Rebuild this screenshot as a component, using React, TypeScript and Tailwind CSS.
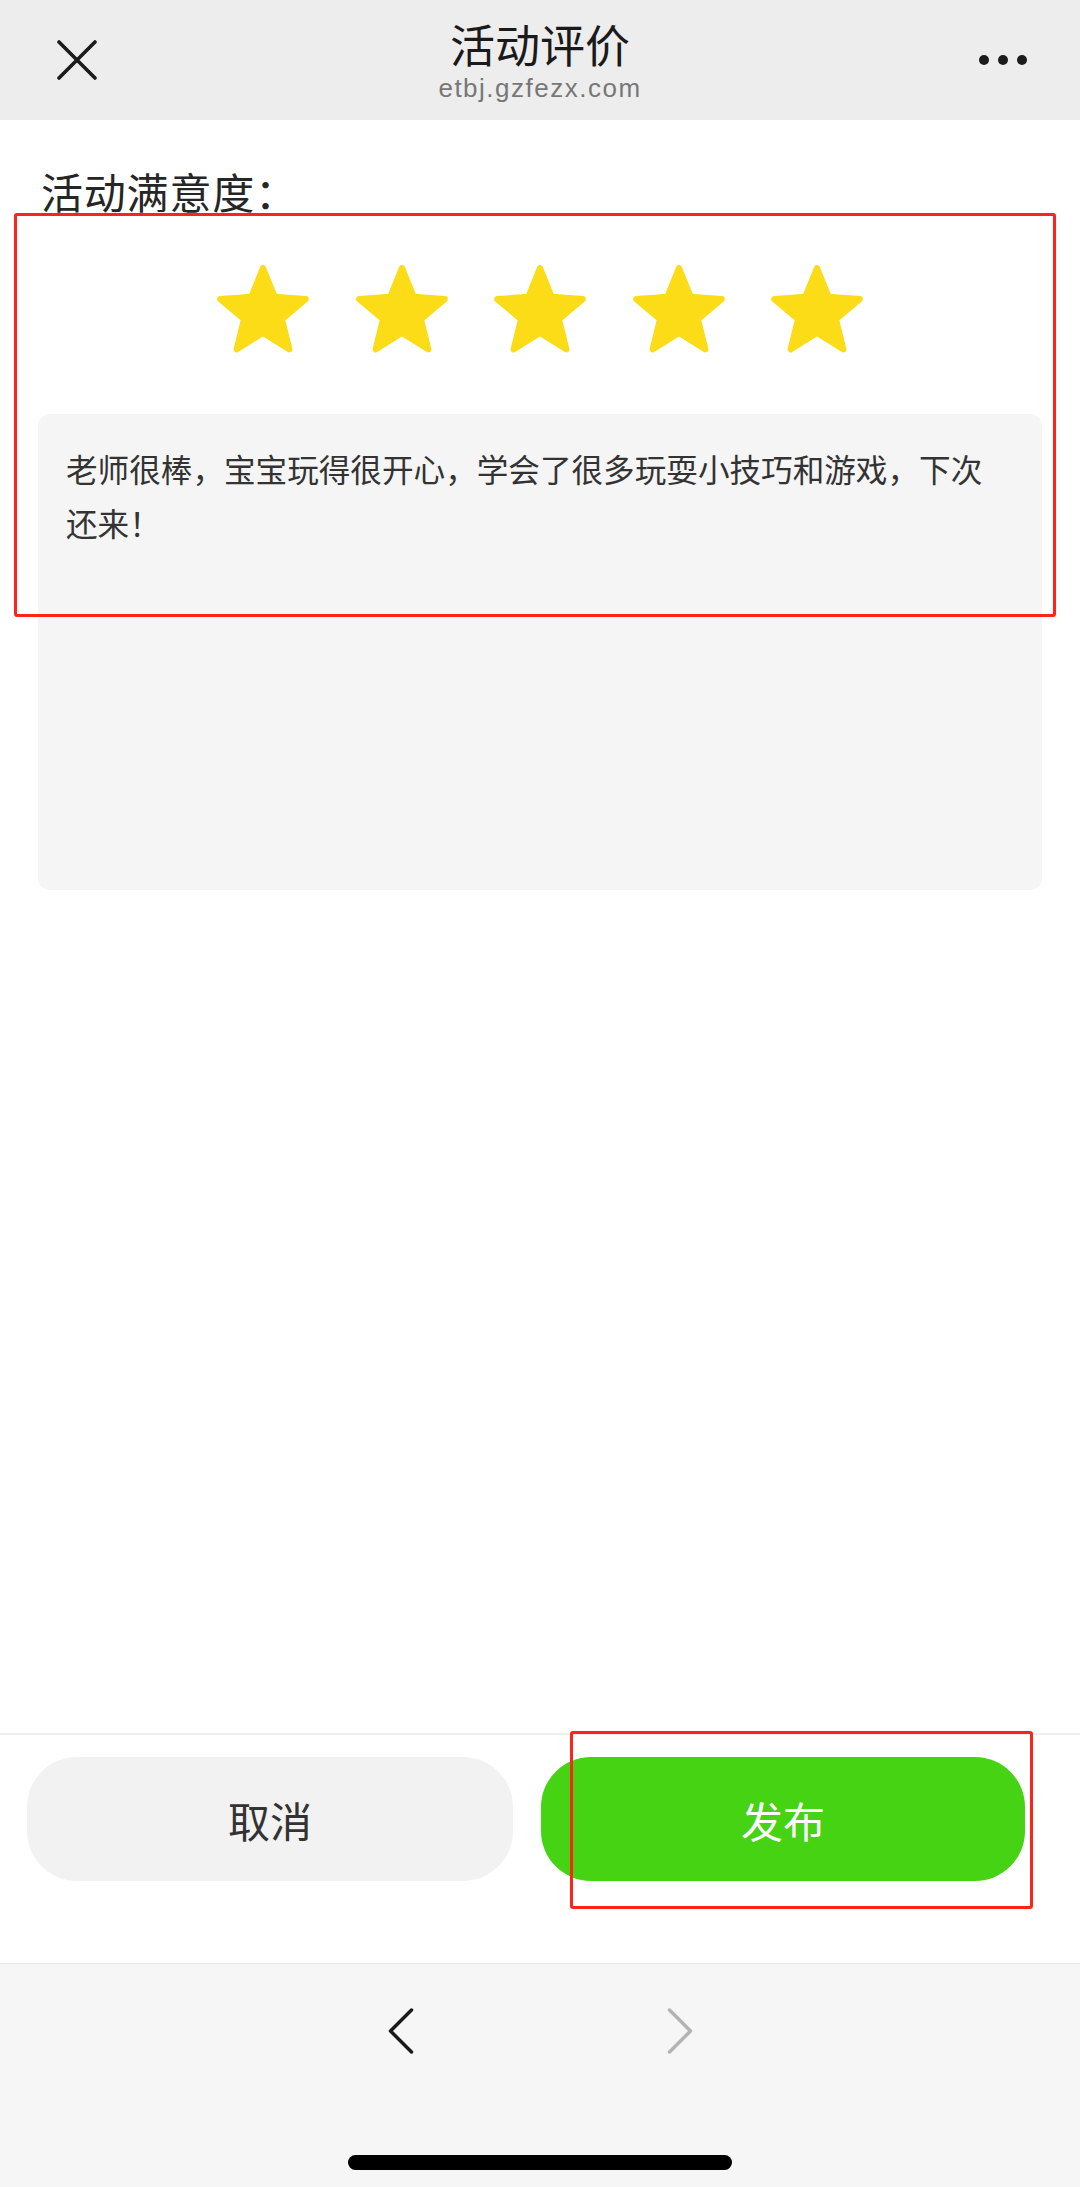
import React from "react";

const CJK = '"Noto Sans CJK SC", "Noto Sans", sans-serif';

function starPoints(cx: number, cy: number, R: number, r: number) {
  const pts: string[] = [];
  for (let i = 0; i < 10; i++) {
    const a = -Math.PI / 2 + (i * Math.PI) / 5;
    const rad = i % 2 === 0 ? R : r;
    pts.push(`${(cx + rad * Math.cos(a)).toFixed(2)},${(cy + rad * Math.sin(a)).toFixed(2)}`);
  }
  return pts.join(" ");
}

function Star() {
  return (
    <svg width="92" height="88" viewBox="0 0 92 88" className="block shrink-0">
      <polygon
        points={starPoints(46, 48, 45, 20)}
        fill="#fbdc17"
        stroke="#fbdc17"
        strokeWidth="6"
        strokeLinejoin="round"
      />
    </svg>
  );
}

export default function App() {
  return (
    <div
      className="relative flex h-[2187px] w-[1080px] flex-col overflow-hidden bg-white"
      style={{ fontFamily: CJK }}
    >
      {/* Header */}
      <header className="flex h-[120px] shrink-0 items-center bg-[#ededed]">
        <div className="flex w-[154px] items-center pl-[57px]">
          <svg width="40" height="40" viewBox="0 0 40 40">
            <path
              d="M2 2 L38 38 M38 2 L2 38"
              stroke="#1b1b1b"
              strokeWidth="3.6"
              strokeLinecap="round"
            />
          </svg>
        </div>

        <div className="flex flex-1 flex-col items-center">
          <p className="text-[45px] leading-[52px] text-[#1a1a1a]">
            活动评价
          </p>
          <p
            className="mt-[4px] text-[26px] leading-[28px] tracking-[1.5px] text-[#777777]"
            style={{ fontFamily: '"Liberation Sans", Arial, sans-serif' }}
          >
            etbj.gzfezx.com
          </p>
        </div>

        <div className="flex w-[154px] items-center justify-end gap-[9px] pr-[53px]">
          <span className="h-[10px] w-[10px] rounded-full bg-[#1b1b1b]" />
          <span className="h-[10px] w-[10px] rounded-full bg-[#1b1b1b]" />
          <span className="h-[10px] w-[10px] rounded-full bg-[#1b1b1b]" />
        </div>
      </header>

      {/* Content */}
      <main className="flex flex-1 flex-col px-[38px]">
        <p className="mt-[46px] pl-[3px] text-[42px] leading-[50px] tracking-[0.8px] text-[#262626]">
          活动满意度：
        </p>

        <div className="mt-[49px] flex justify-center gap-[46.5px]">
          <Star />
          <Star />
          <Star />
          <Star />
          <Star />
        </div>

        <div className="mt-[61px] h-[476px] rounded-[12px] bg-[#f5f5f5] pb-[28px] pl-[28px] pr-[36px] pt-[27px]">
          <p className="text-[31.6px] leading-[54px] text-[#333333]">
            老师很棒，宝宝玩得很开心，学会了很多玩耍小技巧和游戏，下次还来！
          </p>
        </div>
      </main>

      {/* Action bar */}
      <div className="flex h-[230px] shrink-0 flex-col border-t-2 border-[#efefef]">
        <div className="flex gap-[28px] pl-[27px] pt-[22px]">
          <button className="flex h-[124px] w-[486px] items-center justify-center rounded-[50px] bg-[#f2f2f2] text-[42px] text-[#333333]">
            取消
          </button>
          <button className="flex h-[124px] w-[484px] items-center justify-center rounded-[50px] bg-[#45d314] text-[42px] text-white">
            发布
          </button>
        </div>
      </div>

      {/* Browser toolbar */}
      <div className="flex h-[224px] shrink-0 flex-col items-center border-t border-[#e6e6e6] bg-[#f6f6f6]">
        <div className="mt-[44px] flex gap-[253px]">
          <svg width="26" height="46" viewBox="0 0 26 46">
            <path
              d="M23.5 2 L2.5 23 L23.5 44"
              fill="none"
              stroke="#1a1a1a"
              strokeWidth="3.5"
              strokeLinecap="round"
              strokeLinejoin="round"
            />
          </svg>
          <svg width="26" height="46" viewBox="0 0 26 46">
            <path
              d="M2.5 2 L23.5 23 L2.5 44"
              fill="none"
              stroke="#b3b3b3"
              strokeWidth="3.5"
              strokeLinecap="round"
              strokeLinejoin="round"
            />
          </svg>
        </div>
        <div className="mt-[101px] h-[15px] w-[384px] rounded-full bg-black" />
      </div>

      {/* Annotation boxes */}
      <div className="pointer-events-none absolute left-[14px] top-[213px] h-[404px] w-[1042px] rounded-[3px] border-[3px] border-[#ff2419]" />
      <div className="pointer-events-none absolute left-[570px] top-[1731px] h-[178px] w-[463px] rounded-[3px] border-[3px] border-[#ff2419]" />
    </div>
  );
}
